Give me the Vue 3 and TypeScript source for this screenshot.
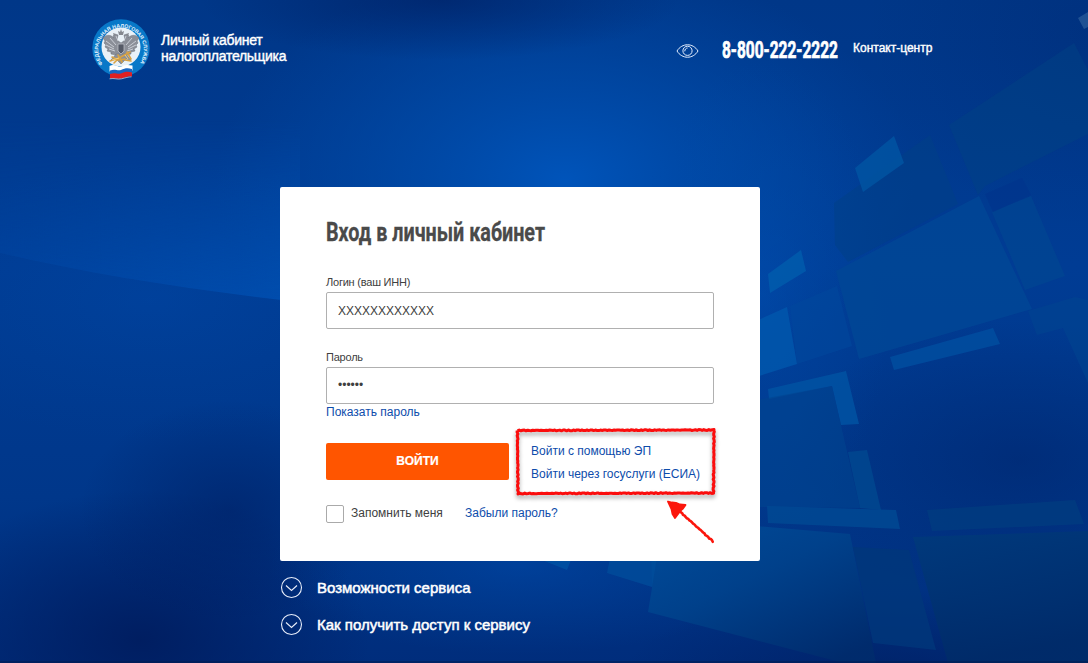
<script setup lang="ts">
import { ref } from 'vue'

const login = ref('XXXXXXXXXXXX')
const password = ref('••••••')
const remember = ref(false)

interface Tile { points: string; fill: string; opacity: number }

const tiles: Tile[] = [
  { points: '949,125 1074,43 1088,70 1088,134 985,186 978,195', fill: '#004184', opacity: 0.5 },
  { points: '834,203 930,135 958,204 848,262 835,245', fill: '#004086', opacity: 0.5 },
  { points: '855,168 894,136 904,163 863,192', fill: '#0055a2', opacity: 0.8 },
  { points: '768,274 801,250 806,271 770,293', fill: '#005cac', opacity: 0.8 },
  { points: '836,271 979,196 1032,309 859,359', fill: '#004795', opacity: 0.85 },
  { points: '992,212 1031,196 1065,276 1025,290', fill: '#004592', opacity: 0.75 },
  { points: '985,194 1022,178 1031,195 993,212', fill: '#00348c', opacity: 0.6 },
  { points: '1028,311 1075,297 1088,300 1088,383 1063,328 1037,335', fill: '#004590', opacity: 0.55 },
  { points: '790,306 837,286 852,346 797,364', fill: '#00489c', opacity: 0.6 },
  { points: '756,321 787,307 797,364 756,377', fill: '#0058ac', opacity: 0.8 },
  { points: '890,357 993,328 1000,344 894,370', fill: '#004fa0', opacity: 0.8 },
  { points: '768,389 846,371 859,424 841,425 832,386 769,399', fill: '#0052a2', opacity: 0.85 },
  { points: '756,400 832,386 860,508 756,507', fill: '#004490', opacity: 0.6 },
  { points: '848,452 867,450 881,510 860,508', fill: '#004890', opacity: 0.8 },
  { points: '767,506 896,510 900,529 768,523', fill: '#004a94', opacity: 0.8 },
  { points: '927,510 1075,500 1084,524 932,531', fill: '#003c80', opacity: 0.8 },
  { points: '651,540 652,588 648,612 840,662 876,663 850,534 756,526', fill: 'url(#pane)', opacity: 0.85 },
  { points: '853,547 909,550 936,650 873,643', fill: '#00377a', opacity: 0.8 },
  { points: '913,537 1088,531 1088,663 948,663', fill: 'url(#paneRight)', opacity: 0.9 },
  { points: '610,558 657,558 652,587 607,573', fill: '#004e9b', opacity: 0.75 },
  { points: '542,560 571,560 567,570', fill: '#0055a5', opacity: 0.7 },
  { points: '1078,18 1088,12 1088,27 1084,29', fill: '#3465a0', opacity: 0.6 },
]

const sections: string[] = ['Возможности сервиса', 'Как получить доступ к сервису']

// Hand-drawn stroke: walks along the given corners and shifts each step sideways a little.
function crayon(corners: [number, number][]): string {
  const jitter = [0.3, -0.3, 0.1, -0.35, 0.4, -0.2, 0.3, -0.4, 0, -0.2]
  const out: string[] = []
  let n = 0
  for (let i = 0; i < corners.length - 1; i++) {
    const [x1, y1] = corners[i]
    const [x2, y2] = corners[i + 1]
    const len = Math.hypot(x2 - x1, y2 - y1)
    const steps = Math.round(len / 1.7)
    for (let k = 0; k <= steps; k++) {
      const j = jitter[(n * 3 + (n >> 2)) % jitter.length]
      n++
      const x = x1 + ((x2 - x1) * k) / steps - ((y2 - y1) / len) * j
      const y = y1 + ((y2 - y1) * k) / steps + ((x2 - x1) / len) * j
      out.push(`${x.toFixed(1)},${y.toFixed(1)}`)
    }
  }
  return out.join(' ')
}

const frame = crayon([[8.5, 8.5], [205, 8], [204.5, 71], [9, 71.5], [8.5, 8.5]])
const shaft = crayon([[168, 87], [204, 119.5]])
</script>

<template>
  <div class="page">
    <svg class="backdrop" viewBox="0 0 1088 663" aria-hidden="true">
      <defs>
        <linearGradient id="base" x1="0" y1="0" x2="0" y2="1">
          <stop offset="0" stop-color="#003788" />
          <stop offset=".4" stop-color="#003c94" />
          <stop offset=".75" stop-color="#00378a" />
          <stop offset="1" stop-color="#002d7c" />
        </linearGradient>
        <radialGradient id="glow"><stop offset="0" stop-color="#0054ba" /><stop offset=".5" stop-color="#004dac" stop-opacity=".6" /><stop offset="1" stop-color="#004aa8" stop-opacity="0" /></radialGradient>
        <radialGradient id="dark"><stop offset="0" stop-color="#001b5c" /><stop offset="1" stop-color="#001b5c" stop-opacity="0" /></radialGradient>
        <linearGradient id="beam" x1="0" y1="0" x2="1" y2="0"><stop offset="0" stop-color="#0048a6" stop-opacity=".5" /><stop offset="1" stop-color="#0050b2" stop-opacity=".9" /></linearGradient>
        <linearGradient id="beamFade" x1="0" y1="0" x2="0" y2="1"><stop offset="0" stop-color="#fff" stop-opacity="0" /><stop offset="1" stop-color="#fff" /></linearGradient>
        <mask id="beamMask"><rect y="120" width="300" height="185" fill="url(#beamFade)" /></mask>
        <linearGradient id="pane" x1="0" y1="0" x2=".8" y2="1"><stop offset="0" stop-color="#004e9c" /><stop offset=".45" stop-color="#00438c" /><stop offset="1" stop-color="#002c6c" /></linearGradient>
        <linearGradient id="paneRight" x1="0" y1="0" x2=".3" y2="1"><stop offset="0" stop-color="#003a7c" /><stop offset="1" stop-color="#002b68" /></linearGradient>
      </defs>
      <rect width="1088" height="663" fill="url(#base)" />
      <ellipse cx="565" cy="180" rx="350" ry="220" fill="url(#glow)" />
      <ellipse cx="760" cy="300" rx="130" ry="240" fill="url(#glow)" opacity=".35" />
      <ellipse cx="440" cy="0" rx="240" ry="60" fill="url(#dark)" opacity=".55" />
      <ellipse cx="1088" cy="30" rx="220" ry="200" fill="url(#dark)" opacity=".2" />
      <ellipse cx="150" cy="300" rx="280" ry="140" fill="url(#glow)" opacity=".22" />
      <path d="M0 120H300V302C190 290 90 274 0 253Z" fill="url(#beam)" mask="url(#beamMask)" />
      <ellipse cx="140" cy="640" rx="230" ry="150" fill="url(#dark)" opacity=".85" />
      <ellipse cx="230" cy="510" rx="150" ry="110" fill="url(#dark)" opacity=".5" />
      <ellipse cx="1020" cy="460" rx="240" ry="140" fill="url(#dark)" opacity=".38" />
      <ellipse cx="880" cy="680" rx="260" ry="90" fill="url(#dark)" opacity=".6" />
      <ellipse cx="520" cy="565" rx="250" ry="90" fill="url(#glow)" opacity=".4" />
      <polygon v-for="(t, i) in tiles" :key="i" :points="t.points" :fill="t.fill" :opacity="t.opacity" />
      <rect y="661" width="1088" height="2" fill="#001b50" opacity=".5" />
    </svg>

    <header class="header">
      <svg class="emblem" width="60" height="62" viewBox="0 0 60 62" role="img">
        <defs><path id="ring" d="M11.800 46A22.800 22.800 0 1 1 48.200 46L46 48.500" /></defs>
        <circle cx="30" cy="30" r="28.7" fill="#0878c8" />
        <circle cx="30" cy="29" r="19.5" fill="#e9f1f7" />
        <text class="ring-text"><textPath href="#ring">ФЕДЕРАЛЬНАЯ НАЛОГОВАЯ СЛУЖБА</textPath></text>
        <g fill="#8b8f98" stroke="#6b707b" stroke-width=".5">
          <path d="M27 17c-4-2-6 1-4 3-5-5-9-2-11 0l2 3-1 2 2 2-1 2 3 2-1 2 4 1 0 2 5 1 5 5 5-5 5-1 0-2 4-1-1-2 3-2-1-2 2-2-1-2 2-3c-2-2-6-5-11 0 2-2 0-5-4-3l1 5-4 3-4-3z" />
          <path d="M25 36l-5 6 5-1 5 5 5-5 5 1-5-6z" />
        </g>
        <path d="M15 23l8 6M15 27l8 4M18 31l6 2M45 23l-8 6M45 27l-8 4M42 31l-6 2M19 20l6 7M41 20l-6 7M25 18l2 5M35 18l-2 5" stroke="#d9dde4" stroke-width=".8" fill="none" />
        <path d="M28 17l-1-4 2 1 1-3 1 3 2-1-1 4zM23 18l-1-3 3 1zM37 18l1-3-3 1z" fill="#85888f" />
        <path d="M27 26h6v7l-3 3-3-3z" fill="#555a66" stroke="#c5c8d0" stroke-width=".7" />
        <path d="M19 43l9-3 11-6M21 39l6 3 7-1M27 37l4 7M36 34l4 7M23 45l4-4M34 42l6 1" fill="none" stroke="#d9a242" stroke-width="1.600" stroke-linecap="round" />
        <path d="M21 42l7-2M34 37l3 4" stroke="#f5cf77" fill="none" />
        <path d="M18.500 48c5-3 8 1.500 12 .5 4-2 7-1.500 11-1v5c-4-1-8 1-12 2-4 0-7-2-11-1z" fill="#fff" />
        <path d="M19 52.500c5-2 7 .5 11-.5 4-2 7-2 11-1v4c-4-1-7 1-11 2-4 1-7-2-11-1z" fill="#1767c4" />
        <path d="M19 56c5-2 7 .5 11-.5 4-2 7-2 11-1v4c-4-1-7 2-11 2-4 1-7-1-11 0z" fill="#e02022" />
        <path d="M18.500 60.800c5-1 8 1 12 0s7-2 10-2" fill="none" stroke="#d2d8e6" stroke-width=".7" />
      </svg>
      <div class="brand">Личный кабинет<br />налогоплательщика</div>
      <svg class="eye" width="23" height="16" viewBox="0 0 23 16" fill="none" stroke="#e6efff" stroke-width="1">
        <path d="M1 8C6-.3 17-.3 22 8 17 16.3 6 16.3 1 8Z" />
        <circle cx="11.5" cy="7.8" r="4.6" />
        <path d="M8.8 8.3c0-2 1.1-3.2 2.8-3.3" />
      </svg>
      <svg class="phone" width="118" height="30">
        <g transform="translate(1 20) scale(.72 1)">
          <text textLength="161" lengthAdjust="spacingAndGlyphs">8-800-222-2222</text>
        </g>
      </svg>
      <a class="contact">Контакт-центр</a>
    </header>

    <main class="card">
      <svg class="title" width="222" height="34">
        <g transform="translate(0 25) scale(.75 1)">
          <text textLength="292" lengthAdjust="spacingAndGlyphs">Вход в личный кабинет</text>
        </g>
      </svg>
      <label class="label">Логин (ваш ИНН)</label>
      <input v-model="login" class="field" type="text" />
      <label class="label second">Пароль</label>
      <input v-model="password" class="field dots" type="text" />
      <a class="link show">Показать пароль</a>
      <div class="actions">
        <button class="submit">ВОЙТИ</button>
        <div class="alternatives">
          <a class="link">Войти с помощью ЭП</a>
          <a class="link">Войти через госуслуги (ЕСИА)</a>
        </div>
      </div>
      <div class="options">
        <input v-model="remember" class="check" type="checkbox" />
        <span class="remember">Запомнить меня</span>
        <a class="link forgot">Забыли пароль?</a>
      </div>
      <svg class="marker" width="216" height="130" viewBox="0 0 216 130">
        <g class="marker-ink" fill="none" stroke="#fb0d0d" stroke-linejoin="round">
          <polyline :points="frame" stroke-width="3" />
        </g>
        <g fill="#fb160c" stroke="#fb160c" stroke-linejoin="round" stroke-linecap="round">
          <polyline :points="shaft" stroke-width="2.600" fill="none" />
          <path d="M159 79.500L163 80.500 167 80.800 171 82.500 176.500 83 174 86.500 171 89 169 92 166 96 163.500 92 162.500 87Z" stroke-width="1.800" />
        </g>
      </svg>
    </main>

    <div class="sections">
      <a v-for="s in sections" :key="s" class="section">
        <svg width="23" height="23" viewBox="0 0 23 23" fill="none" stroke="#e8eefa" stroke-width="1.1">
          <circle cx="11.500" cy="11.500" r="10" />
          <path d="M6 9.500L11.500 14.500 17 9.500" />
        </svg>
        <span>{{ s }}</span>
      </a>
    </div>
  </div>
</template>

<style>
body { margin: 0; }
</style>

<style scoped>
.page { position: relative; width: 1088px; height: 663px; overflow: hidden; font-family: "Liberation Sans", Arial, sans-serif; background: #003888; }
.backdrop { position: absolute; inset: 0; width: 1088px; height: 663px; }
.header { position: relative; display: flex; align-items: flex-start; height: 187px; padding-left: 91px; box-sizing: border-box; color: #fff; }
.emblem { margin-top: 18px; overflow: visible; }
.ring-text { font: bold 5.2px "Liberation Sans", sans-serif; fill: #e4f3ff; }
.brand { width: 149px; margin: 32px 0 0 10px; font-size: 14px; line-height: 16px; letter-spacing: -.28px; white-space: nowrap; -webkit-text-stroke: .4px #fff; }
.eye { margin: 43px 0 0 366px; }
.phone { margin: 38px 0 0 22px; overflow: visible; }
.phone text { font: bold 23px Roboto, sans-serif; fill: #fff; stroke: #fff; stroke-width: .7px; }
.contact { margin: 41px 0 0 14px; font-size: 12px; line-height: 14px; -webkit-text-stroke: .4px #fff; white-space: nowrap; }
.card { position: relative; display: flex; flex-direction: column; align-items: flex-start; width: 480px; height: 374px; margin-left: 280px; padding: 29px 46px 0; box-sizing: border-box; border-radius: 2px; background: #fff; color: #404040; }
.title { overflow: visible; }
.title text { font: bold 26px Roboto, sans-serif; fill: #4a4a4a; stroke: #4a4a4a; stroke-width: .3px; }
.label { margin-top: 26px; height: 16px; font-size: 11px; line-height: 13px; letter-spacing: -.22px; }
.label.second { margin-top: 22px; }
.field { width: 388px; height: 37px; box-sizing: border-box; padding: 0 11px; border: 1px solid #b0b0b0; border-radius: 2px; background: #fff; color: #404040; font: 12px "Liberation Sans", Arial, sans-serif; outline: none; }
.dots { padding-bottom: 2px; }
.link { color: #0d4cab; font-size: 12px; line-height: 14px; white-space: nowrap; }
.show { margin-top: 1px; }
.actions { display: flex; margin-top: 24px; height: 37px; }
.submit { width: 183px; height: 37px; padding: 0 0 2px; border: 0; border-radius: 2px; background: #ff5500; color: #fff; font: bold 12px "Liberation Sans", Arial, sans-serif; -webkit-text-stroke: .2px #fff; }
.alternatives { display: flex; flex-direction: column; gap: 9px; margin-left: 22px; padding-top: 1px; }
.options { display: flex; align-items: flex-start; margin-top: 25px; }
.check { appearance: none; width: 18px; height: 18px; margin: 0; border: 1px solid #aaa; border-radius: 2px; background: #fff; }
.remember { width: 114px; margin: 1px 0 0 7px; font-size: 12px; line-height: 14px; white-space: nowrap; }
.forgot { margin-top: 1px; }
.marker { position: absolute; left: 229px; top: 235px; pointer-events: none; }
.marker-ink { filter: drop-shadow(0 3px 2px rgba(0, 0, 0, .35)); }
.sections { position: relative; display: flex; flex-direction: column; gap: 15px; margin: 15px 0 0 280px; }
.section { display: flex; align-items: center; gap: 14px; height: 22.500px; color: #fff; font-size: 15px; -webkit-text-stroke: .5px #fff; white-space: nowrap; }
</style>
